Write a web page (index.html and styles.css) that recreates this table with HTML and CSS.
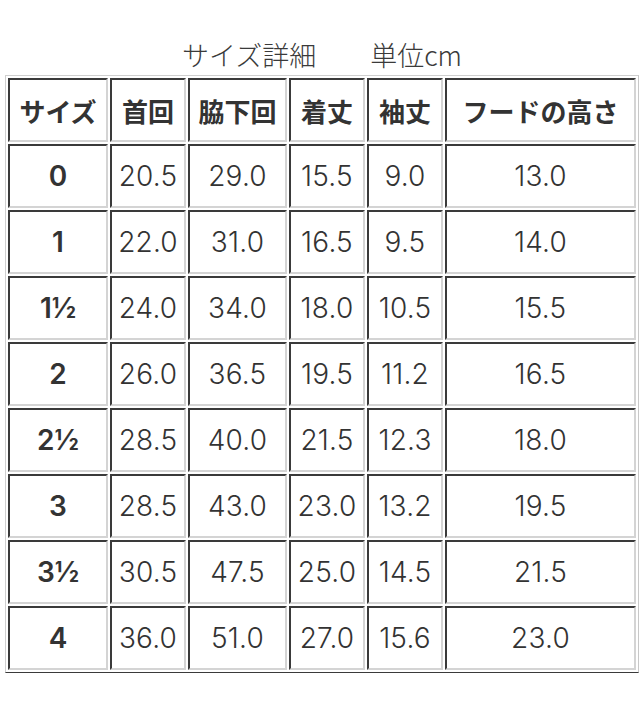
FILE: index.html
```html
<!DOCTYPE html>
<html lang="ja">
<head>
<meta charset="utf-8">
<title>サイズ詳細</title>
<link rel="stylesheet" href="styles.css">
</head>
<body>
<table class="size-table">
  <caption class="caption">サイズ詳細　　単位cm</caption>
  <colgroup>
    <col class="c1"><col class="c2"><col class="c3"><col class="c4"><col class="c5"><col class="c6">
  </colgroup>
  <tr class="head">
    <th>サイズ</th><th>首回</th><th>脇下回</th><th>着丈</th><th>袖丈</th><th>フードの高さ</th>
  </tr>
  <tr><th class="size">0</th><td>20.5</td><td>29.0</td><td>15.5</td><td>9.0</td><td>13.0</td></tr>
  <tr><th class="size">1</th><td>22.0</td><td>31.0</td><td>16.5</td><td>9.5</td><td>14.0</td></tr>
  <tr><th class="size">1½</th><td>24.0</td><td>34.0</td><td>18.0</td><td>10.5</td><td>15.5</td></tr>
  <tr><th class="size">2</th><td>26.0</td><td>36.5</td><td>19.5</td><td>11.2</td><td>16.5</td></tr>
  <tr><th class="size">2½</th><td>28.5</td><td>40.0</td><td>21.5</td><td>12.3</td><td>18.0</td></tr>
  <tr><th class="size">3</th><td>28.5</td><td>43.0</td><td>23.0</td><td>13.2</td><td>19.5</td></tr>
  <tr><th class="size">3½</th><td>30.5</td><td>47.5</td><td>25.0</td><td>14.5</td><td>21.5</td></tr>
  <tr><th class="size">4</th><td>36.0</td><td>51.0</td><td>27.0</td><td>15.6</td><td>23.0</td></tr>
</table>
</body>
</html>
```
FILE: styles.css
```css
html, body {
  margin: 0;
  padding: 0;
  background: #ffffff;
}

body {
  font-family: "Noto Sans CJK JP", "Noto Sans", sans-serif;
  color: #333333;
}

.size-table {
  margin-left: 5px;
  width: 634px;
  table-layout: fixed;
  border-collapse: separate;
  border-spacing: 2px;
  border-style: solid;
  border-width: 1px;
  border-color: #cfcfcf #c8c8c8 #3a3a3a #cfcfcf;
}

.caption {
  font-size: 27px;
  font-weight: 300;
  line-height: 30px;
  padding: 40px 0 5px;
  color: #3a3a3a;
  white-space: pre;
}

.c1 { width: 100px; }
.c2 { width: 76px; }
.c3 { width: 99px; }
.c4 { width: 76px; }
.c5 { width: 76px; }
.c6 { width: 191px; }

.size-table th,
.size-table td {
  box-sizing: border-box;
  height: 64px;
  padding: 0;
  text-align: center;
  vertical-align: middle;
  border-style: solid;
  border-width: 2px;
  border-color: #3a3a3a #d4d4d4 #d4d4d4 #3a3a3a;
  white-space: nowrap;
  overflow: visible;
}

.size-table th {
  font-family: "Noto Sans CJK JP", sans-serif;
  font-weight: 700;
  font-size: 26px;
  color: #333333;
}

.size-table th.size {
  font-family: "Inter", "Noto Sans", sans-serif;
  font-weight: 600;
  font-size: 28px;
}

.size-table td {
  font-family: "Inter", "Noto Sans", sans-serif;
  font-weight: 300;
  font-size: 28px;
  color: #333333;
  letter-spacing: 0.2px;
}
```
